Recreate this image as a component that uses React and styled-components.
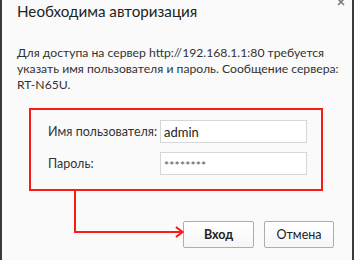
import React from "react";
import styled, { createGlobalStyle } from "styled-components";

const Global = createGlobalStyle`
  html, body { margin: 0; padding: 0; background: #fafafa; }
  #root { width: 354px; height: 260px; }
`;

const Dialog = styled.div`
  position: relative;
  box-sizing: border-box;
  width: 354px;
  height: 260px;
  overflow: hidden;
  background: #fafafa;
  border-left: 2px solid #3a3a3a;
  border-right: 2px solid #3a3a3a;
  padding: 0 18px 0 15px;
  font-family: Lato, "Open Sans", sans-serif;
  color: #333;
  display: flex;
  flex-direction: column;
`;

const Close = styled.svg`
  position: absolute;
  top: -2px;
  right: 7px;
`;

const Title = styled.h1`
  margin: 1px 0 0;
  font-size: 15.2px;
  font-weight: 400;
  line-height: 20px;
  color: #222;
`;

const Message = styled.p`
  margin: 24px 0 0;
  font-size: 12.2px;
  line-height: 16px;
  color: #333;
  white-space: nowrap;
`;

const Highlight = styled.div`
  box-sizing: border-box;
  width: 294px;
  margin: 15px 0 0 12px;
  border: 2px solid #ff1a1a;
  padding: 10px 14px 14px 17px;
  display: flex;
  flex-direction: column;
  gap: 9px;
`;

const Row = styled.div`
  display: flex;
  align-items: center;
  justify-content: space-between;
`;

const Label = styled.span`
  font-size: 12.5px;
  color: #333;
`;

const Input = styled.div`
  box-sizing: border-box;
  width: 147px;
  height: 23px;
  background: #fff;
  border: 1px solid #d6d6d6;
  padding: ${(p) => (p.$secret ? "3px 0 0 3px" : "0 0 0 3px")};
  display: flex;
  align-items: center;
  font-size: ${(p) => (p.$secret ? "12px" : "13px")};
  color: ${(p) => (p.$secret ? "#555" : "#222")};
  letter-spacing: ${(p) => (p.$secret ? "0.2px" : "0")};
`;

const Buttons = styled.div`
  display: flex;
  justify-content: flex-end;
  gap: 10px;
  margin-top: 30px;
`;

const Button = styled.button`
  box-sizing: border-box;
  width: ${(p) => p.$w}px;
  height: 27px;
  border: 1px solid #adadad;
  border-radius: 2px;
  background: linear-gradient(#ffffff, #f6f6f6);
  font-family: Lato, "Open Sans", sans-serif;
  font-size: 12.5px;
  font-weight: ${(p) => (p.$primary ? 700 : 400)};
  color: #222;
  padding: 0;
`;

const Overlay = styled.svg`
  position: absolute;
  left: -2px;
  top: 0;
  pointer-events: none;
`;

export default function App() {
  return (
    <>
      <Global />
      <Dialog>
        <Close width="8" height="8" viewBox="0 0 8 8">
          <path d="M1 1 L7 7 M7 1 L1 7" stroke="#7a7a7a" strokeWidth="1.6" />
        </Close>
        <Title>Необходима авторизация</Title>
        <Message>
          Для доступа на сервер http://192.168.1.1:80 требуется
          <br />
          указать имя пользователя и пароль. Сообщение сервера:
          <br />
          RT-N65U.
        </Message>
        <Highlight>
          <Row>
            <Label>Имя пользователя:</Label>
            <Input>admin</Input>
          </Row>
          <Row>
            <Label>Пароль:</Label>
            <Input $secret>********</Input>
          </Row>
        </Highlight>
        <Buttons>
          <Button $w={71} $primary>Вход</Button>
          <Button $w={70}>Отмена</Button>
        </Buttons>
        <Overlay width="354" height="260" viewBox="0 0 354 260">
          <path
            d="M75 191 V232 H182"
            fill="none"
            stroke="#ff1a1a"
            strokeWidth="2"
          />
          <path
            d="M176 227 L182.5 232 L176 237"
            fill="none"
            stroke="#ff1a1a"
            strokeWidth="2.2"
          />
        </Overlay>
      </Dialog>
    </>
  );
}
